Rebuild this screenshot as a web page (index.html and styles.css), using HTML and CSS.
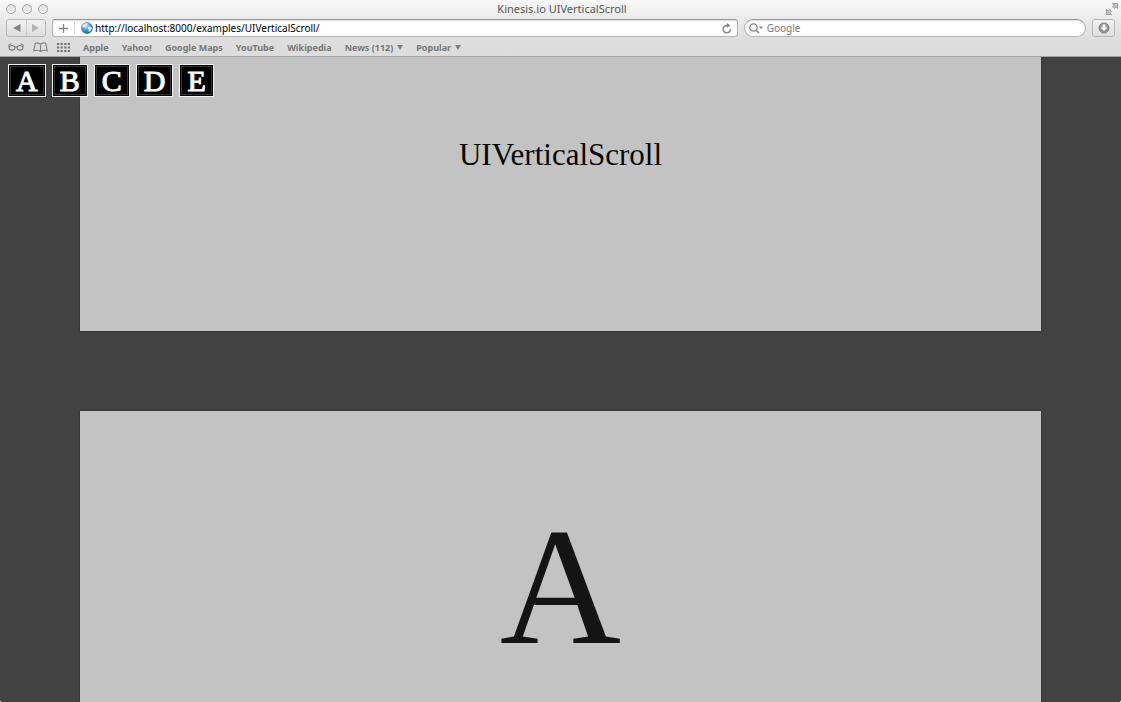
FILE: index.html
```html
<!DOCTYPE html>
<html lang="en">
<head>
<meta charset="utf-8">
<title>Kinesis.io UIVerticalScroll</title>
<link rel="stylesheet" href="styles.css">
</head>
<body>
<div class="window">
  <header class="chrome">
    <div class="titlebar">
      <div class="lights">
        <button class="light" aria-label="Close"></button>
        <button class="light" aria-label="Minimize"></button>
        <button class="light" aria-label="Zoom"></button>
      </div>
      <div class="window-title">Kinesis.io UIVerticalScroll</div>
      <button class="fullscreen" aria-label="Full screen">
        <svg width="12" height="12" viewBox="0 0 12 12" fill="#c4c4c4" stroke="#8e8e8e" stroke-width=".8"><path d="M6.500.5H11.500V5.500L9.800 3.900 8.300 5.400 6.600 3.700 8.100 2.200zM.5 6.500V11.500H5.500L3.900 9.800 5.400 8.300 3.700 6.600 2.200 8.100z"/></svg>
      </button>
    </div>
    <div class="toolbar">
      <div class="history">
        <button aria-label="Back"><svg width="9" height="8" viewBox="0 0 9 8"><path d="M8.500 0V8L1 4z" fill="#858585"/></svg></button>
        <button aria-label="Forward"><svg width="9" height="8" viewBox="0 0 9 8"><path d="M1 0V8L8 4z" fill="#b4b4b4"/></svg></button>
      </div>
      <div class="address">
        <button class="add" aria-label="Add bookmark"><svg width="9" height="9" viewBox="0 0 9 9"><path d="M4.500 0V9M0 4.500H9" stroke="#858585" stroke-width="1.300"/></svg></button>
        <svg class="globe" width="12" height="12" viewBox="0 0 12 12"><defs><radialGradient id="sea" cx=".4" cy=".3" r=".75"><stop offset="0" stop-color="#c3e6fb"/><stop offset=".55" stop-color="#4594d6"/><stop offset="1" stop-color="#185594"/></radialGradient></defs><circle cx="6" cy="6" r="5.600" fill="url(#sea)" stroke="#4678a8" stroke-width=".5"/><path d="M1.500 3.500Q4 .8 6.500 1.200L5.800 3 4.200 4 3.500 5.500 1.500 5zM6.500 5.200L9 4.400 11 6 9.800 8.600 8 10.300 7.400 7.700z" fill="#e4f1f5"/></svg>
        <input class="url" type="text" aria-label="Address" value="http://localhost:8000/examples/UIVerticalScroll/">
        <button class="reload" aria-label="Reload"><svg width="10" height="11" viewBox="0 0 10 11"><path d="M5.500 2.500A3.700 3.700 0 1 0 8.500 6.200" fill="none" stroke="#858585" stroke-width="1.400"/><path d="M4.800 0L8.500 2.600 4.800 5.100z" fill="#858585"/></svg></button>
      </div>
      <div class="search">
        <svg width="15" height="11" viewBox="0 0 15 11"><circle cx="4.500" cy="4.500" r="3.700" fill="none" stroke="#858585" stroke-width="1.300"/><path d="M7.200 7.200L10 10" stroke="#858585" stroke-width="1.600"/><path d="M10 3.500H14L12 6z" fill="#858585"/></svg>
        <input type="text" aria-label="Search" placeholder="Google">
      </div>
      <button class="downloads" aria-label="Downloads"><svg width="12" height="12" viewBox="0 0 12 12"><circle cx="6" cy="6" r="5" fill="#929292" stroke="#7f7f7f"/><path d="M4.500 2.500H7.500V5.500H9.400L6 9.200 2.600 5.500H4.500z" fill="#fff"/></svg></button>
    </div>
    <nav class="bookmarks">
      <div class="views">
        <button aria-label="Reading list"><svg width="16" height="8" viewBox="0 0 16 8" fill="none" stroke="#808080" stroke-width="1.100"><ellipse cx="4" cy="4.800" rx="2.900" ry="2.300"/><ellipse cx="12" cy="4.800" rx="2.900" ry="2.300"/><path d="M6.900 4.300Q8 3.300 9.100 4.300M1.200 4L.6 2.800 2 1.200 3.500 1M14.800 4L15.400 2.800 14 1.200 12.500 1"/></svg></button>
        <button aria-label="Bookmarks"><svg width="15" height="11" viewBox="0 0 15 11" fill="none" stroke="#808080" stroke-width="1.100"><path d="M7.500 2.300Q5.400.2 2.300 1.300L.7 8.700Q5 7.500 7.500 9.500 10 7.500 14.300 8.700L12.700 1.300Q9.600.2 7.500 2.300zV9.500"/></svg></button>
        <button aria-label="Top sites"><svg width="13" height="9" viewBox="0 0 13 9"><path d="M0 1H13M0 4.500H13M0 8H13" stroke="#747474" stroke-width="2" stroke-dasharray="2.200 1.400"/></svg></button>
      </div>
      <a href="#">Apple</a>
      <a href="#">Yahoo!</a>
      <a href="#">Google Maps</a>
      <a href="#">YouTube</a>
      <a href="#">Wikipedia</a>
      <button class="folder">News (112)<svg width="6" height="5" viewBox="0 0 6 5"><path d="M0 0H6L3 5z" fill="#808080"/></svg></button>
      <button class="folder">Popular<svg width="6" height="5" viewBox="0 0 6 5"><path d="M0 0H6L3 5z" fill="#808080"/></svg></button>
    </nav>
  </header>
  <main class="page">
    <nav class="pager">
      <a href="#a">A</a>
      <a href="#b">B</a>
      <a href="#c">C</a>
      <a href="#d">D</a>
      <a href="#e">E</a>
    </nav>
    <section class="panel intro"><h1>UIVerticalScroll</h1></section>
    <section class="panel letter" id="a"><h2>A</h2></section>
  </main>
</div>
</body>
</html>
```

FILE: styles.css
```css
* { box-sizing: border-box; }
body { margin: 0; background: #fff; font-family: "Noto Sans", sans-serif; }
button { border: 0; padding: 0; background: none; font: inherit; color: inherit; display: flex; align-items: center; justify-content: center; }
input { border: 0; padding: 0; background: none; font: inherit; min-width: 0; outline: 0; }
svg { display: block; flex: none; }
a { color: inherit; text-decoration: none; }

.window { height: 100vh; display: flex; flex-direction: column; overflow: hidden; border-radius: 4px 4px 3px 3px; }

.chrome { flex: none; background: linear-gradient(#f9f9f9, #ebebeb 18px, #dedede 38px, #dcdcdc); border-bottom: 1px solid #a4a4a4; }
.titlebar { display: grid; grid-template-columns: 1fr auto 1fr; align-items: center; height: 18px; padding: 0 3px 0 6px; font-size: 11px; color: #555; }
.lights { display: flex; gap: 6px; }
.light { width: 10px; height: 10px; border: 1px solid #aaa; border-radius: 50%; background: linear-gradient(#ddd, #f6f6f6); }
.window-title { line-height: 18px; }
.fullscreen { justify-self: end; }

.toolbar { display: flex; align-items: center; height: 20px; padding: 0 6px; font-size: 10px; }
.history, .downloads { height: 18px; border: 1px solid #b8b8b8; border-radius: 3px; background: linear-gradient(#f1f1f1, #dedede); }
.history { display: flex; width: 40px; margin-right: 6px; }
.history button { flex: 1; }
.history button + button { border-left: 1px solid #ccc; }
.address, .search { display: flex; align-items: center; height: 18px; border: 1px solid #b4b4b4; border-top-color: #969696; background: #fff; box-shadow: inset 0 1px 2px #ddd; }
.address { flex: 345; border-radius: 3px; padding-right: 5px; margin-right: 6px; }
.add { width: 22px; height: 12px; border-right: 1px solid #d4d4d4; margin-right: 6px; }
.globe { margin-right: 2px; }
.url { flex: 1; color: #000; }
.search { flex: 171; border-radius: 9px; padding-left: 4px; margin-right: 6px; gap: 3px; }
.search input { flex: 1; }
.search input::placeholder { color: #777; opacity: 1; }
.downloads { width: 23px; }

.bookmarks { display: flex; align-items: center; height: 18px; padding: 0 8px; gap: 13px; font-size: 9px; font-weight: 700; color: #777; }
.views { display: flex; gap: 9px; }
.folder { gap: 4px; }

.page { position: relative; flex: 1; min-height: 0; overflow: hidden; display: flex; flex-direction: column; gap: 80px; padding: 0 80px; background: #424242 repeating-conic-gradient(#414141 0 25%, #434343 0 50%) 0 0 / 4px 4px; font-family: "Liberation Serif", serif; }
.panel { flex: none; background: #c3c3c3; box-shadow: 0 0 1px 1px #393939; text-align: center; }
.panel h1, .panel h2 { margin: 0; font-weight: 400; }
.intro { padding: 80px 0 158px; color: #060606; }
.intro h1 { font-size: 31px; line-height: 36px; }
.letter { padding: 80px 0; color: #141414; }
.letter h2 { font-size: 168px; line-height: 190px; }
.pager { position: absolute; top: 7px; left: 8px; display: flex; gap: 6px; }
.pager a { padding: 0 7px; border: 1px solid #f2f2f2; box-shadow: inset 0 0 0 1px #000, inset 0 0 0 2px #333; background: #000; color: #fff; font-size: 30px; line-height: 31px; -webkit-text-stroke: 1px #fff; }
```
